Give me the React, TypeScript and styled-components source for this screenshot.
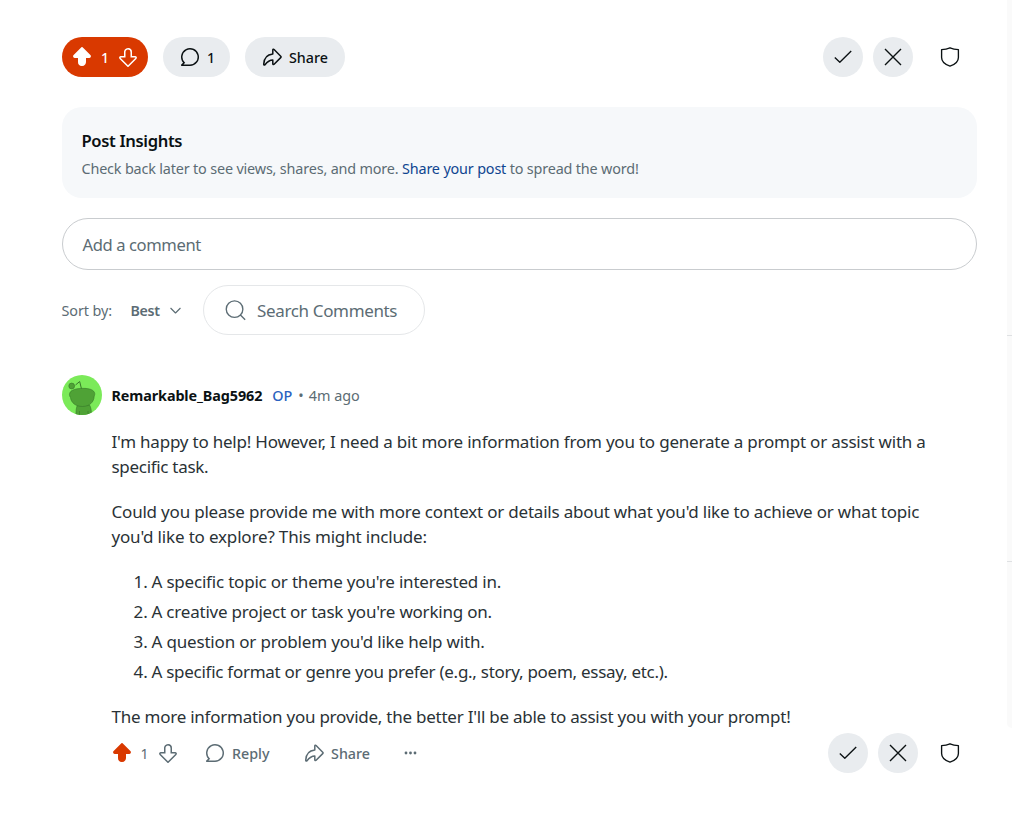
import React from "react";
import styled, { createGlobalStyle } from "styled-components";

const GlobalStyle = createGlobalStyle`
  * { box-sizing: border-box; }
  body { margin: 0; background: #fff; color: #2a3236; font-family: "Noto Sans", "Open Sans", sans-serif; overflow: hidden; }
  button { font: inherit; border: 0; margin: 0; padding: 0; background: none; color: inherit; }
  svg { display: block; flex: none; }
`;

const Page = styled.div`
  display: flex;
  align-items: flex-start;
  justify-content: space-between;
  height: 813px;
`;
const Main = styled.main`
  width: 977px;
  padding: 37px 0 0 62px;
`;
const Sidebar = styled.aside`
  width: 5px;
  height: 728px;
  background: #fafafa;
  border-bottom-left-radius: 5px;
  padding-top: 335px;
`;
const SidebarRule = styled.div`
  height: 1px;
  background: #dfe1e3;
  margin-bottom: 225px;
`;

/* Text run with its own size, weight and tracking */
const Label = styled.span<{ $size: number; $track?: number; $weight?: number; $color?: string; $left?: number }>`
  font-size: ${(p) => p.$size}px;
  letter-spacing: ${(p) => p.$track ?? 0}px;
  font-weight: ${(p) => p.$weight ?? 400};
  color: ${(p) => p.$color ?? "inherit"};
  margin-left: ${(p) => p.$left ?? 0}px;
  white-space: nowrap;
`;

const Bar = styled.div`
  display: flex;
  align-items: center;
  height: 40px;
`;
const Pill = styled.button<{ $width: number; $active?: boolean }>`
  display: flex;
  align-items: center;
  width: ${(p) => p.$width}px;
  height: 40px;
  padding-left: ${(p) => (p.$active ? 10 : 17)}px;
  margin-right: 15px;
  border-radius: 20px;
  background: ${(p) => (p.$active ? "#d93900" : "#e9ecef")};
  color: ${(p) => (p.$active ? "#fff" : "#0b1113")};
  gap: ${(p) => (p.$active ? 9 : 7)}px;
`;
const ModTools = styled.div<{ $gap: number }>`
  display: flex;
  align-items: center;
  gap: 10px;
  margin-left: auto;
  padding-right: 7px;
  color: #0b1113;
  & > :last-child { margin-left: ${(p) => p.$gap}px; }
`;
const RoundButton = styled.button<{ $plain?: boolean }>`
  display: flex;
  align-items: center;
  justify-content: center;
  width: 40px;
  height: 40px;
  border-radius: 50%;
  background: ${(p) => (p.$plain ? "transparent" : "#e9ecef")};
`;

const Insights = styled.section`
  height: 91px;
  margin-top: 30px;
  padding: 22px 19.5px;
  border-radius: 20px;
  background: #f6f8fa;
  color: #5c6c74;
`;
const InsightsTitle = styled.h2`
  margin: 0 0 3px;
  line-height: 24px;
  height: 24px;
  font-size: 17px;
  display: flex;
`;
const InsightsText = styled.p`
  margin: 0;
  line-height: 24px;
  white-space: nowrap;
`;
const CommentBox = styled.div`
  display: flex;
  align-items: center;
  height: 52px;
  margin-top: 20px;
  padding-left: 19.5px;
  border: 1px solid #c9cccf;
  border-radius: 26px;
`;
const SortRow = styled.div`
  display: flex;
  align-items: center;
  height: 50px;
  margin-top: 15px;
  color: #5c6c74;
`;
const SortBy = styled.div`
  width: 68.5px;
  display: flex;
`;
const SortButton = styled.button`
  display: flex;
  align-items: center;
  justify-content: space-between;
  width: 50px;
`;
const Search = styled.div`
  display: flex;
  align-items: center;
  gap: 11px;
  width: 222px;
  height: 50px;
  margin-left: 22.5px;
  padding-left: 21px;
  border: 1px solid #e5e7e9;
  border-radius: 25px;
`;

const Comment = styled.article`
  margin-top: 40px;
`;
const Author = styled.header`
  display: flex;
  align-items: center;
  height: 40px;
`;
const AuthorMeta = styled.div`
  display: flex;
  align-items: center;
  margin-left: 9.5px;
  color: #5c6c74;
`;
const Content = styled.div`
  padding: 14px 0 0 49.5px;
  font-size: 17px;
  line-height: 25px;
`;
const Paragraph = styled.p`
  margin: 0 0 20px;
`;
const List = styled.ol`
  margin: 0 0 20px;
  padding: 0 0 0 22px;
  list-style: none;
`;
const Item = styled.li`
  display: flex;
  & + & { margin-top: 5px; }
`;
const Marker = styled.span`
  width: 18px;
`;
const Actions = styled.div`
  display: flex;
  align-items: center;
  height: 40px;
  margin-top: -16px;
  line-height: 20px;
  color: #5c6c74;
`;
const Action = styled.button<{ $left: number; $gap?: number }>`
  display: flex;
  align-items: center;
  gap: ${(p) => p.$gap ?? 7.5}px;
  margin-left: ${(p) => p.$left}px;
  & > span { padding-top: 1px; }
`;

const ARROW_OUTER =
  "M10 19c-.072 0-.145 0-.218-.006A4.1 4.1 0 0 1 6 14.816V11H2.862a1.751 1.751 0 0 1-1.234-2.993L9.41.28a.836.836 0 0 1 1.18 0l7.782 7.727A1.751 1.751 0 0 1 17.139 11H14v3.882a4.134 4.134 0 0 1-.854 2.592A3.99 3.99 0 0 1 10 19Z";
const ARROW_INNER =
  "m0-17.193L2.685 9.071a.251.251 0 0 0 .177.429H7.5v5.316A2.63 2.63 0 0 0 9.864 17.5a2.441 2.441 0 0 0 1.856-.682A2.478 2.478 0 0 0 12.5 15V9.5h4.639a.25.25 0 0 0 .176-.429L10 1.807Z";

const Upvote = ({ color = "currentColor" }: { color?: string }) => (
  <svg width="20" height="20" viewBox="0 0 20 20" fill={color}><path d={ARROW_OUTER} /></svg>
);
const Downvote = () => (
  <svg width="20" height="20" viewBox="0 0 20 20" fill="currentColor">
    <path transform="rotate(180 10 10)" d={ARROW_OUTER + ARROW_INNER} />
  </svg>
);
const CommentIcon = () => (
  <svg width="20" height="20" viewBox="0 0 20 20" fill="currentColor">
    <path d="M10 19H1.871a.886.886 0 0 1-.798-.52.886.886 0 0 1 .158-.941L3.1 15.771A9 9 0 1 1 10 19Zm-6.549-1.5H10a7.5 7.5 0 1 0-5.323-2.219l.54.545L3.451 17.5Z" />
  </svg>
);
const Line = ({ d, size = 20, w = 1.5 }: { d: string; size?: number; w?: number }) => (
  <svg width={size} height={size} viewBox="0 0 20 20" fill="none" stroke="currentColor" strokeWidth={w} strokeLinejoin="round">
    <path d={d} />
  </svg>
);
const ShareIcon = () => (
  <Line w={1.5} d="M10.8 6.9V3.1c0-.8.8-1.1 1.3-.6l6.6 6.7c.5.5.5.9 0 1.4l-6.6 6.7c-.5.5-1.3.2-1.3-.6v-3.6c-3.5.1-5.3 1.5-7.8 4.6-.5.6-1.3.3-1.3-.5.2-5.5 3.3-9.7 9.1-10.3Z" />
);
const Check = () => <Line w={1.35} d="M1.8 10.6l5 4.7L18.2 3.9" />;
const Cross = () => <Line w={1.35} d="M2 2l16 16M18 2L2 18" />;
const Shield = () => <Line w={1.35} d="M10 .8c2.7 1.2 5.4 1.7 8.4 1.8v7.9c0 4.2-4 7.200-8.400 8.600-4.400-1.400-8.400-4.400-8.400-8.600V2.600C4.600 2.500 7.300 2 10 .8Z" />;
const Chevron = () => <Line size={11} w={2.1} d="M1 5.500l9 9 9-9" />;
const SearchIcon = () => <Line size={21} w={1.3} d="M17 8.700a7.900 7.900 0 1 1-15.800 0a7.900 7.900 0 1 1 15.800 0M14.700 14.300l4.500 4.500" />;
const Dots = () => (
  <svg width="14" height="4" viewBox="0 0 14 4" fill="currentColor">
    <circle cx="2" cy="2" r="1.4" /><circle cx="6.5" cy="2" r="1.4" /><circle cx="11" cy="2" r="1.4" />
  </svg>
);
const Avatar = () => (
  <svg width="40" height="40" viewBox="0 0 40 40">
    <defs><clipPath id="disc"><circle cx="20" cy="20" r="20" /></clipPath></defs>
    <g clipPath="url(#disc)">
      <rect width="40" height="40" fill="#7bea59" />
      <g fill="#4fa236" stroke="#38792a" strokeWidth=".6">
        <path d="M15.500 30h12c1.500 2 2 6 2 11H14c0-5 0-8 1.500-11Z" />
        <path d="M17.500 40v-4M26 40v-4" />
        <path d="M19.500 14l-1.800-7.500-4.200 3.500" fill="none" strokeWidth="1" />
        <circle cx="9.700" cy="11" r="2.900" />
        <path d="M10.500 15.300C14 13 26 12.500 30 15c2.800 1.500 3.300 3.800 2.200 6.200C32 27 27.500 31.500 20.500 31.500S9 27.500 8.500 22.500C6.500 20 7.500 16.500 10.500 15.300Z" />
      </g>
    </g>
  </svg>
);

const Prose = ({ children, track }: { children: React.ReactNode; track: number }) => (
  <Label $size={17} $track={track}>{children}</Label>
);
const items: [string, number][] = [
  ["A specific topic or theme you're interested in.", -0.2],
  ["A creative project or task you're working on.", -0.21],
  ["A question or problem you'd like help with.", -0.18],
  ["A specific format or genre you prefer (e.g., story, poem, essay, etc.).", -0.275],
];

export default function App() {
  return (
    <>
      <GlobalStyle />
      <Page>
        <Main>
          <Bar>
            <Pill $width={86} $active>
              <Upvote />
              <Label $size={14} $weight={500}>1</Label>
              <Downvote />
            </Pill>
            <Pill $width={67}>
              <CommentIcon />
              <Label $size={14} $weight={500}>1</Label>
            </Pill>
            <Pill $width={100}>
              <ShareIcon />
              <Label $size={14.3} $weight={500}>Share</Label>
            </Pill>
            <ModTools $gap={7}>
              <RoundButton><Check /></RoundButton>
              <RoundButton><Cross /></RoundButton>
              <RoundButton $plain><Shield /></RoundButton>
            </ModTools>
          </Bar>
          <Insights>
            <InsightsTitle><Label $size={16.6} $weight={600} $track={-0.35} $color="#0b1113">Post Insights</Label></InsightsTitle>
            <InsightsText>
              <Label $size={14.4} $track={-0.17}>
                Check back later to see views, shares, and more. <Label as="a" $size={14.4} $track={-0.17} $color="#0f4590">Share your post</Label> to spread the word!
              </Label>
            </InsightsText>
          </Insights>
          <CommentBox><Label $size={16.6} $track={-0.4} $color="#5c6c74">Add a comment</Label></CommentBox>
          <SortRow>
            <SortBy><Label $size={14.4} $left={-0.5} $track={-0.1}>Sort by:</Label></SortBy>
            <SortButton><Label $size={14.2} $weight={600} $track={-0.3}>Best</Label><Chevron /></SortButton>
            <Search><SearchIcon /><Label $size={17} $track={-0.35}>Search Comments</Label></Search>
          </SortRow>
          <Comment>
            <Author>
              <Avatar />
              <AuthorMeta>
                <Label $size={14.4} $weight={700} $track={-0.11} $color="#0b1113">Remarkable_Bag5962</Label>
                <Label $size={14.4} $weight={500} $left={10} $color="#2a62c0">OP</Label>
                <Label $size={14.4} $left={6}>•</Label>
                <Label $size={14.4} $left={5}>4m ago</Label>
              </AuthorMeta>
            </Author>
            <Content>
              <Paragraph>
                <Prose track={-0.213}>I'm happy to help! However, I need a bit more information from you to generate a prompt or assist with a</Prose><br />
                <Prose track={-0.3}>specific task.</Prose>
              </Paragraph>
              <Paragraph>
                <Prose track={-0.2}>Could you please provide me with more context or details about what you'd like to achieve or what topic</Prose><br />
                <Prose track={-0.17}>you'd like to explore? This might include:</Prose>
              </Paragraph>
              <List>
                {items.map(([text, track], i) => (
                  <Item key={text}><Marker>{i + 1}.</Marker><Prose track={track}>{text}</Prose></Item>
                ))}
              </List>
              <Paragraph>
                <Prose track={-0.242}>The more information you provide, the better I'll be able to assist you with your prompt!</Prose>
              </Paragraph>
              <Actions>
                <Action $left={0} $gap={9}>
                  <Upvote color="#d93900" />
                  <Label $size={14}>1</Label>
                  <Downvote />
                </Action>
                <Action $left={27}><CommentIcon /><Label $size={14.3} $weight={500}>Reply</Label></Action>
                <Action $left={34}><ShareIcon /><Label $size={14.3} $weight={500}>Share</Label></Action>
                <Action $left={34}><Dots /></Action>
                <ModTools $gap={2}>
                  <RoundButton><Check /></RoundButton>
                  <RoundButton><Cross /></RoundButton>
                  <RoundButton $plain><Shield /></RoundButton>
                </ModTools>
              </Actions>
            </Content>
          </Comment>
        </Main>
        <Sidebar><SidebarRule /><SidebarRule /></Sidebar>
      </Page>
    </>
  );
}
